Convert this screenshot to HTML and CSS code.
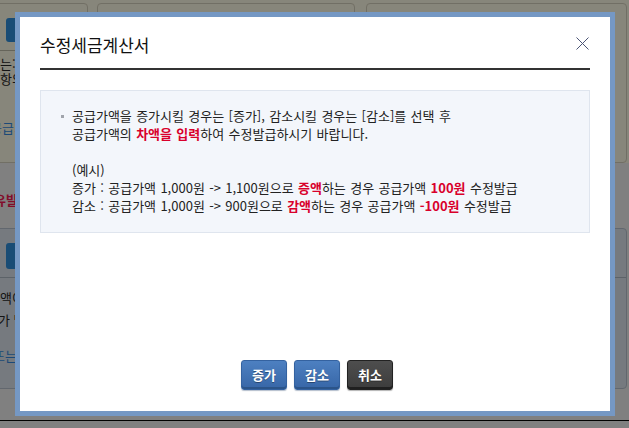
FILE: index.html
```html
<!DOCTYPE html>
<html lang="ko">

<head>
    <meta charset="UTF-8">
    <meta name="viewport" content="width=device-width, initial-scale=1.0">
    <title>수정세금계산서</title>
    <link rel="stylesheet" href="styles.css">
</head>

<body>

    <!-- page under the popup -->
    <div class="page">

        <div class="top">
            <div class="cards">
                <div class="card card-first">
                    <div class="card-head">
                        <span class="head-btn"></span>
                    </div>
                    <p class="card-text">하는:</p>
                    <p class="card-text">사항의</p>
                    <p class="card-link">공급가</p>
                </div>
                <div class="card card-mid"></div>
                <div class="card card-last"></div>
            </div>
        </div>

        <div class="notice">
            <b class="warn">유발</b>
        </div>

        <div class="section">
            <div class="card-head">
                <span class="head-btn"></span>
            </div>
            <p class="section-text">차액이</p>
            <p class="section-text section-text-2">가 발생</p>
            <p class="section-link">또는</p>
        </div>

        <div class="foot"></div>
    </div>

    <div class="overlay"></div>

    <!-- popup -->
    <div class="modal">
        <div class="modal-head">
            <h2 class="modal-title">수정세금계산서</h2>
            <button class="modal-close" type="button" aria-label="닫기">
                <svg width="13" height="13" viewBox="0 0 13 13">
                    <path d="M0.5 0.5 L12.5 12.5 M12.5 0.5 L0.5 12.5" stroke="#4b5475" stroke-width="1" fill="none" />
                </svg>
            </button>
        </div>

        <div class="info">
            <p class="info-item">
                공급가액을 증가시킬 경우는 [증가], 감소시킬 경우는 [감소]를 선택 후<br>
                공급가액의 <b class="red">차액을 입력</b>하여 수정발급하시기 바랍니다.
            </p>
            <p class="info-example">
                (예시)<br>
                증가 : 공급가액 1,000원 -&gt; 1,100원으로 <b class="red">증액</b>하는 경우 공급가액 <b class="red">100원</b> 수정발급<br>
                감소 : 공급가액 1,000원 -&gt; 900원으로 <b class="red">감액</b>하는 경우 공급가액 <b class="red">-100원</b> 수정발급
            </p>
        </div>

        <div class="modal-btns">
            <button class="btn btn-blue" type="button">증가</button>
            <button class="btn btn-blue" type="button">감소</button>
            <button class="btn btn-dark" type="button">취소</button>
        </div>
    </div>

</body>

</html>
```

FILE: styles.css
```css
body {
    margin: 0;
    background: #d6d6d6;
    font-family: "Noto Sans CJK KR", "Noto Sans", sans-serif;
    font-size: 13px;
    color: #222;
    overflow: hidden;
}

p {
    margin: 0;
}

/* page under the popup */

.page {
    width: 629px;
    height: 428px;
}

.top {
    height: 163px;
    background: #e2dfcd;
    padding-top: 3px;
    box-sizing: border-box;
}

.cards {
    display: flex;
    height: 160px;
    margin-left: -10px;
}

.card {
    border: 1px solid #bdbaa8;
    border-radius: 4px;
    box-sizing: border-box;
    height: 100%;
}

.card-first {
    width: 98px;
}

.card-mid {
    width: 258px;
    margin-left: 9px;
}

.card-last {
    width: 261px;
    margin-left: 11px;
}

.card-head {
    padding: 14px 0 8px 15px;
    border-bottom: 1px solid #a9a796;
}

.head-btn {
    display: block;
    width: 70px;
    height: 24px;
    border-radius: 3px;
    background: #2a7fc4;
}

.card-text {
    margin-left: -3px;
    height: 15px;
    line-height: 15px;
    overflow: hidden;
    color: #222;
}

.card-first .card-head {
    margin-bottom: 5px;
}

.card-link {
    margin: 34px 0 0 -1px;
    line-height: 15px;
    color: #2f7bc6;
}

.notice {
    height: 65px;
    padding-top: 29px;
    box-sizing: border-box;
}

.warn {
    display: block;
    margin-left: -6px;
    color: #d8174a;
    line-height: 15px;
}

.section {
    height: 161px;
    margin-left: -10px;
    width: 637px;
    background: #c5ccd4;
    border: 1px solid #a3acb7;
    border-radius: 4px;
    box-sizing: border-box;
}

.section .card-head {
    border-bottom-color: #9aa3ae;
    margin-bottom: 9px;
}

.section .head-btn {
    height: 26px;
}

.section-text {
    margin-left: -3px;
    line-height: 22px;
}

.section-text-2 {
    margin-left: 7px;
}

.section-link {
    margin: 17px 0 0 2px;
    color: #2f7bc6;
    line-height: 15px;
}

.foot {
    height: 31px;
    border-bottom: 1px solid #000;
}

.overlay {
    position: fixed;
    inset: 0;
    background: rgba(0, 0, 0, 0.4);
}

/* popup */

.modal {
    position: fixed;
    left: 15px;
    top: 12px;
    width: 550px;
    height: 373px;
    padding: 0 20px 21px;
    border: 5px solid #7598c4;
    background: #fff;
    display: flex;
    flex-direction: column;
}

.modal-head {
    position: relative;
    padding: 16px 0 11px;
    border-bottom: 2px solid #333;
}

.modal-title {
    margin: 0;
    font-size: 17px;
    font-weight: normal;
    line-height: 24px;
    color: #111;
}

.modal-close {
    position: absolute;
    right: 1px;
    top: 20px;
    width: 13px;
    height: 13px;
    padding: 0;
    border: 0;
    background: none;
    display: block;
}

.modal-close svg {
    display: block;
}

.info {
    margin-top: 20px;
    padding: 16px 20px 17px 31px;
    border: 1px solid #dfe5ee;
    background: #f3f6fb;
    line-height: 18px;
    word-spacing: 0.7px;
    color: #222;
}

.info-item {
    position: relative;
}

.info-item::before {
    content: "";
    position: absolute;
    left: -11px;
    top: 8px;
    width: 3px;
    height: 3px;
    background: #a0a4ab;
}

.info-example {
    margin-top: 18px;
}

.red {
    color: #d9002b;
}

.modal-btns {
    margin-top: auto;
    display: flex;
    justify-content: center;
    gap: 7px;
    padding-left: 4px;
}

.btn {
    width: 46px;
    height: 30px;
    padding: 0 0 1px;
    border-radius: 3px;
    font-family: "Noto Sans CJK KR", sans-serif;
    font-size: 13px;
    font-weight: bold;
    color: #fff;
    text-shadow: 0 1px 0 rgba(0, 0, 0, 0.35);
    cursor: pointer;
}

.btn-blue {
    background: linear-gradient(#4d80c1, #3766a7);
    border: 1px solid #3462a0;
    box-shadow: inset 0 -2px 0 #2b5489, 0 1px 1px rgba(40, 70, 110, 0.35);
}

.btn-dark {
    background: linear-gradient(#4e4e4e, #3c3c3c);
    border: 1px solid #222;
    box-shadow: inset 0 -2px 0 #1f1f1f, 0 1px 1px rgba(0, 0, 0, 0.3);
}
```
